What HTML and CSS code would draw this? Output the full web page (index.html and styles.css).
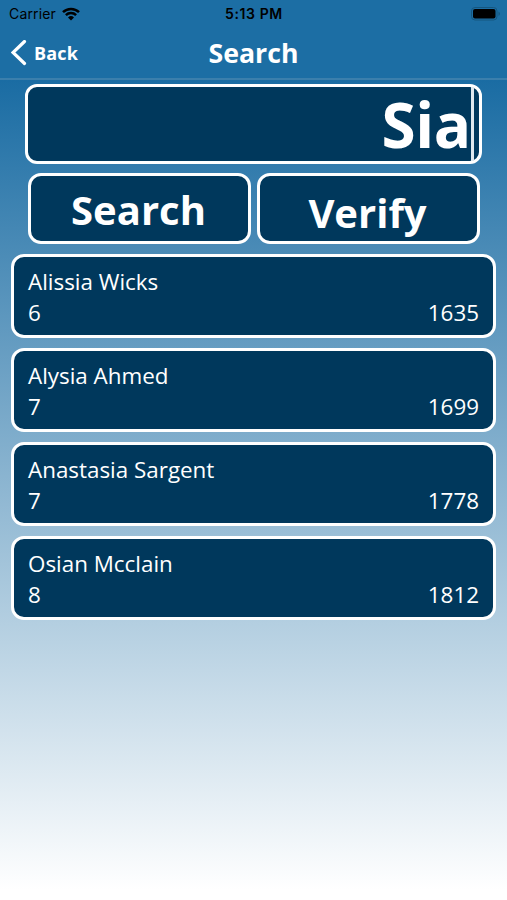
FILE: index.html
```html
<!DOCTYPE html>
<html lang="en">
<head>
    <meta charset="UTF-8">
    <meta name="viewport" content="width=device-width, initial-scale=1.0">
    <title>Search</title>
    <link rel="stylesheet" href="styles.css">
</head>
<body>
    <header>
        <div class="status">
            <div class="carrier">
                <span>Carrier</span>
                <svg class="wifi" viewBox="0 0 18 14" width="18" height="14">
                    <path d="M1 5.2a11.3 11.3 0 0 1 16 0M3.9 8.1a7.2 7.2 0 0 1 10.2 0" fill="none" stroke="#000" stroke-width="2.5"/>
                    <path d="M9 13.6L6 10.5a4.3 4.3 0 0 1 6 0z" fill="#000"/>
                </svg>
            </div>
            <div class="time">5:13 PM</div>
            <div class="power">
                <svg viewBox="0 0 30 14" width="30" height="14">
                    <rect x="0.5" y="0.5" width="25.5" height="12.5" rx="3.5" fill="none" stroke="#15567f"/>
                    <rect x="2" y="2" width="22.5" height="9.5" rx="2" fill="#000"/>
                    <path d="M27.5 4.5a2.5 2.5 0 0 1 0 4.5z" fill="#15567f"/>
                </svg>
            </div>
        </div>
        <nav>
            <div class="back">
                <svg viewBox="0 0 16 26" width="16" height="26">
                    <path d="M13.5 1.5L2 12.5l11.5 11" fill="none" stroke="#fff" stroke-width="3.2" stroke-linecap="round"/>
                </svg>
                <span>Back</span>
            </div>
            <h1>Search</h1>
        </nav>
    </header>
    <main>
        <div class="search-field"><span>Sia</span><i class="caret"></i></div>
        <div class="buttons">
            <button class="search-btn">Search</button>
            <button class="verify-btn">Verify</button>
        </div>
        <div class="results">
            <div class="result">
                <div class="name">Alissia Wicks</div>
                <div class="info"><span>6</span><span>1635</span></div>
            </div>
            <div class="result">
                <div class="name">Alysia Ahmed</div>
                <div class="info"><span>7</span><span>1699</span></div>
            </div>
            <div class="result">
                <div class="name">Anastasia Sargent</div>
                <div class="info"><span>7</span><span>1778</span></div>
            </div>
            <div class="result">
                <div class="name">Osian Mcclain</div>
                <div class="info"><span>8</span><span>1812</span></div>
            </div>
        </div>
    </main>
</body>
</html>
```
FILE: styles.css
```css
* {
    box-sizing: border-box;
}
body {
    margin: 0;
    height: 900px;
    overflow: hidden;
    font-family: "Open Sans", sans-serif;
    color: white;
    background: linear-gradient(#1a6ca3 80px, #fff 890px);
}
header {
    height: 80px;
    background: #1c6ea4;
    border-bottom: 2px solid #3b7fac;
}
.status {
    display: grid;
    grid-template-columns: 1fr 1fr 1fr;
    align-items: center;
    height: 27px;
    padding: 0 6px 0 9px;
    color: black;
    font-family: Inter, sans-serif;
    font-size: 14px;
}
.carrier {
    display: flex;
    align-items: center;
    gap: 6px;
    letter-spacing: 0.15px;
}
.time {
    margin-left: -2px;
    text-align: center;
    font-weight: 600;
    letter-spacing: 0.6px;
}
.power {
    display: flex;
    justify-content: flex-end;
}
nav {
    display: grid;
    grid-template-columns: 1fr 1fr 1fr;
    align-items: center;
    height: 52px;
    padding: 0 11px;
}
.back {
    display: flex;
    align-items: center;
    gap: 7px;
    font-size: 18px;
    font-weight: 700;
    letter-spacing: 0.2px;
}
h1 {
    margin: 0;
    text-align: center;
    font-size: 26.7px;
    line-height: 36px;
}
main {
    padding: 4px 11px 0;
}
.search-field {
    display: flex;
    justify-content: flex-end;
    align-items: center;
    height: 80px;
    margin: 0 14px;
    padding-right: 5px;
    border: 3px solid white;
    border-radius: 12px;
    background: #00385c;
    font-size: 62px;
    font-weight: 700;
    line-height: 74px;
    letter-spacing: -0.3px;
}
.caret {
    width: 3px;
    height: 74px;
    background: #dfe8ee;
}
.buttons {
    display: flex;
    justify-content: space-between;
    margin: 9px 16px 0 17px;
}
button {
    width: 223px;
    height: 71px;
    padding: 2px 2px 0 0;
    border: 3px solid white;
    border-radius: 13px;
    background: #00385c;
    color: white;
    font-family: "Open Sans", sans-serif;
    font-size: 40px;
    font-weight: 700;
    line-height: 54px;
}
.verify-btn {
    padding: 8px 2px 0 0;
}
.results {
    display: flex;
    flex-direction: column;
    gap: 10px;
    margin-top: 10px;
}
.result {
    height: 84px;
    padding: 9px 14px 0;
    border: 3px solid white;
    border-radius: 13px;
    background: #00385c;
    font-size: 22.4px;
    line-height: 31px;
}
.info {
    display: flex;
    justify-content: space-between;
}
```
